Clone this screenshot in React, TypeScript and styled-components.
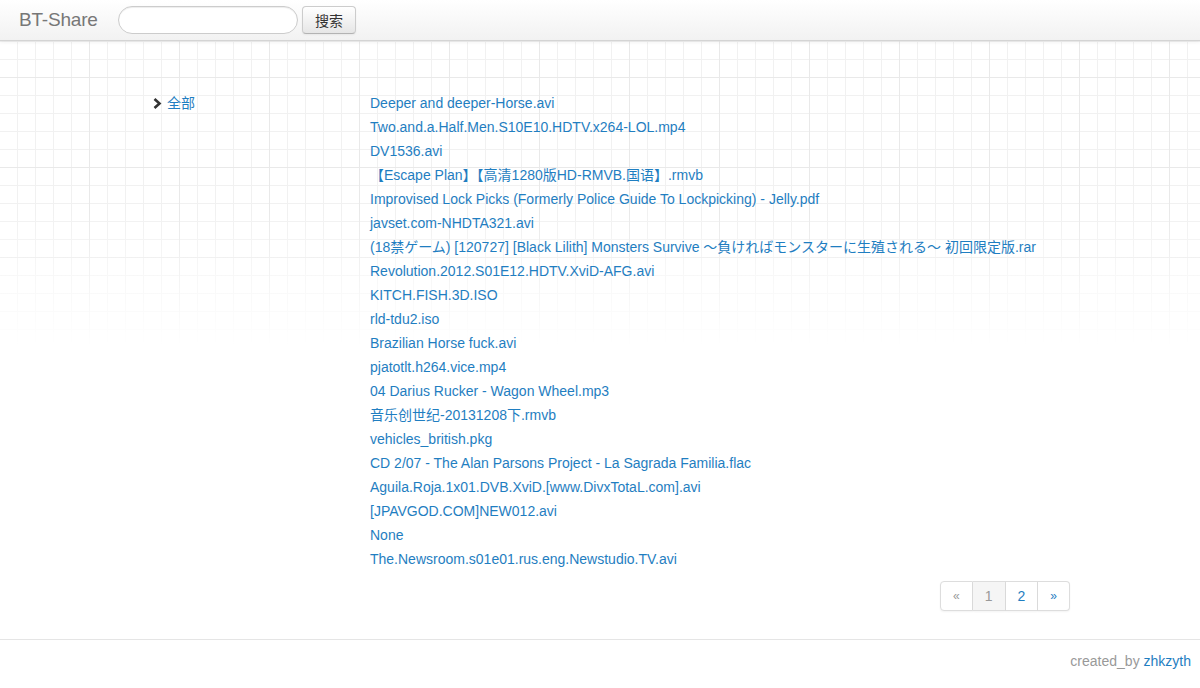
import styled, { createGlobalStyle } from 'styled-components';

const GlobalStyle = createGlobalStyle`
  html, body {
    margin: 0;
    padding: 0;
    background: #fff;
  }
  body {
    font-family: "Liberation Sans", Helvetica, Arial, "Noto Sans CJK SC", sans-serif;
    font-size: 14px;
    line-height: 20px;
    color: #333;
  }
`;

const LINK = '#1f7ec1';

const Navbar = styled.header`
  height: 40px;
  display: flex;
  align-items: center;
  background: linear-gradient(to bottom, #ffffff, #f2f2f2);
  border-bottom: 1px solid #d4d4d4;
  box-shadow: 0 1px 4px rgba(0, 0, 0, 0.065);
  position: relative;
  z-index: 1;
`;

const Brand = styled.a`
  display: block;
  width: 80px;
  padding: 0 19px;
  font-size: 19px;
  font-weight: 200;
  color: #777;
  text-decoration: none;
  white-space: nowrap;
  letter-spacing: -0.2px;
`;

const SearchInput = styled.input`
  box-sizing: border-box;
  width: 180px;
  height: 28px;
  padding: 4px 14px;
  border: 1px solid #ccc;
  border-radius: 15px;
  box-shadow: inset 0 1px 1px rgba(0, 0, 0, 0.075);
  background: #fff;
  font-family: inherit;
  font-size: 14px;
  outline: none;
`;

const SearchButton = styled.button`
  box-sizing: border-box;
  margin-left: 4px;
  width: 54px;
  height: 28px;
  padding: 0;
  border: 1px solid #ccc;
  border-bottom-color: #b3b3b3;
  border-radius: 4px;
  background: linear-gradient(to bottom, #ffffff, #e6e6e6);
  box-shadow: inset 0 1px 0 rgba(255, 255, 255, 0.2), 0 1px 2px rgba(0, 0, 0, 0.05);
  color: #333;
  font-family: "Liberation Sans", "Noto Sans CJK SC", sans-serif;
  font-size: 14px;
  cursor: pointer;
`;

const Main = styled.main`
  display: flex;
  padding: 50px 0 0 153px;
  background-image:
    linear-gradient(to bottom, rgba(255, 255, 255, 0) 170px, #fff 305px),
    repeating-linear-gradient(to bottom, transparent 0 36px, #e9e9e9 36px 37px, transparent 37px 90px),
    repeating-linear-gradient(to right, transparent 0 89px, #e9e9e9 89px 90px),
    repeating-linear-gradient(to bottom, #f1f1f1 0 1px, transparent 1px 18px),
    repeating-linear-gradient(to right, transparent 0 17px, #f1f1f1 17px 18px);
  background-size: 100% 305px;
  background-repeat: no-repeat;
`;

const Sidebar = styled.nav`
  width: 217px;
  flex: none;
`;

const NavLink = styled.a`
  display: flex;
  align-items: center;
  height: 24px;
  color: ${LINK};
  text-decoration: none;
  svg {
    margin-right: 5px;
  }
`;

const Content = styled.section`
  width: 700px;
`;

const FileList = styled.ul`
  list-style: none;
  margin: 0;
  padding: 0;
`;

const FileItem = styled.li`
  line-height: 24px;
  white-space: nowrap;
  a {
    color: ${LINK};
    text-decoration: none;
  }
`;

const Pagination = styled.ul`
  list-style: none;
  display: flex;
  justify-content: flex-end;
  margin: 10px 0 0;
  padding: 0;
`;

const PageItem = styled.li<{ $active?: boolean; $muted?: boolean; $small?: boolean }>`
  padding: 4px 12px;
  line-height: 20px;
  border: 1px solid #ddd;
  border-left-width: 0;
  background: ${({ $active }) => ($active ? '#f5f5f5' : '#fff')};
  color: ${({ $active, $muted }) => ($active || $muted ? '#999' : LINK)};
  font-size: ${({ $small }) => ($small ? '12px' : '14px')};
  box-shadow: 0 1px 2px rgba(0, 0, 0, 0.05);
  &:first-child {
    border-left-width: 1px;
    border-radius: 4px 0 0 4px;
  }
  &:last-child {
    border-radius: 0 4px 4px 0;
  }
`;

const Footer = styled.footer`
  margin-top: 28px;
  border-top: 1px solid #e5e5e5;
  padding: 11px 9px 20px 0;
  text-align: right;
  color: #999;
  a {
    color: ${LINK};
    text-decoration: none;
  }
`;

const files = [
  'Deeper and deeper-Horse.avi',
  'Two.and.a.Half.Men.S10E10.HDTV.x264-LOL.mp4',
  'DV1536.avi',
  '【Escape Plan】【高清1280版HD-RMVB.国语】.rmvb',
  'Improvised Lock Picks (Formerly Police Guide To Lockpicking) - Jelly.pdf',
  'javset.com-NHDTA321.avi',
  '(18禁ゲーム) [120727] [Black Lilith] Monsters Survive ～負ければモンスターに生殖される～ 初回限定版.rar',
  'Revolution.2012.S01E12.HDTV.XviD-AFG.avi',
  'KITCH.FISH.3D.ISO',
  'rld-tdu2.iso',
  'Brazilian Horse fuck.avi',
  'pjatotlt.h264.vice.mp4',
  '04 Darius Rucker - Wagon Wheel.mp3',
  '音乐创世纪-20131208下.rmvb',
  'vehicles_british.pkg',
  'CD 2/07 - The Alan Parsons Project - La Sagrada Familia.flac',
  'Aguila.Roja.1x01.DVB.XviD.[www.DivxTotaL.com].avi',
  '[JPAVGOD.COM]NEW012.avi',
  'None',
  'The.Newsroom.s01e01.rus.eng.Newstudio.TV.avi',
];

const Chevron = () => (
  <svg width="9" height="11" viewBox="0 0 9 11">
    <path d="M1.5 1 L6.5 5.5 L1.5 10" fill="none" stroke="#333" strokeWidth="2.6" strokeLinejoin="miter" />
  </svg>
);

const App = () => (
  <>
    <GlobalStyle />
    <Navbar>
      <Brand href="#">BT-Share</Brand>
      <SearchInput type="text" />
      <SearchButton type="button">搜索</SearchButton>
    </Navbar>
    <Main>
      <Sidebar>
        <NavLink href="#">
          <Chevron />
          全部
        </NavLink>
      </Sidebar>
      <Content>
        <FileList>
          {files.map((f, i) => (
            <FileItem key={i}>
              <a href="#">{f}</a>
            </FileItem>
          ))}
        </FileList>
        <Pagination>
          <PageItem $muted $small>«</PageItem>
          <PageItem $active>1</PageItem>
          <PageItem>2</PageItem>
          <PageItem $small>»</PageItem>
        </Pagination>
      </Content>
    </Main>
    <Footer>
      created_by <a href="#">zhkzyth</a>
    </Footer>
  </>
);

export default App;
